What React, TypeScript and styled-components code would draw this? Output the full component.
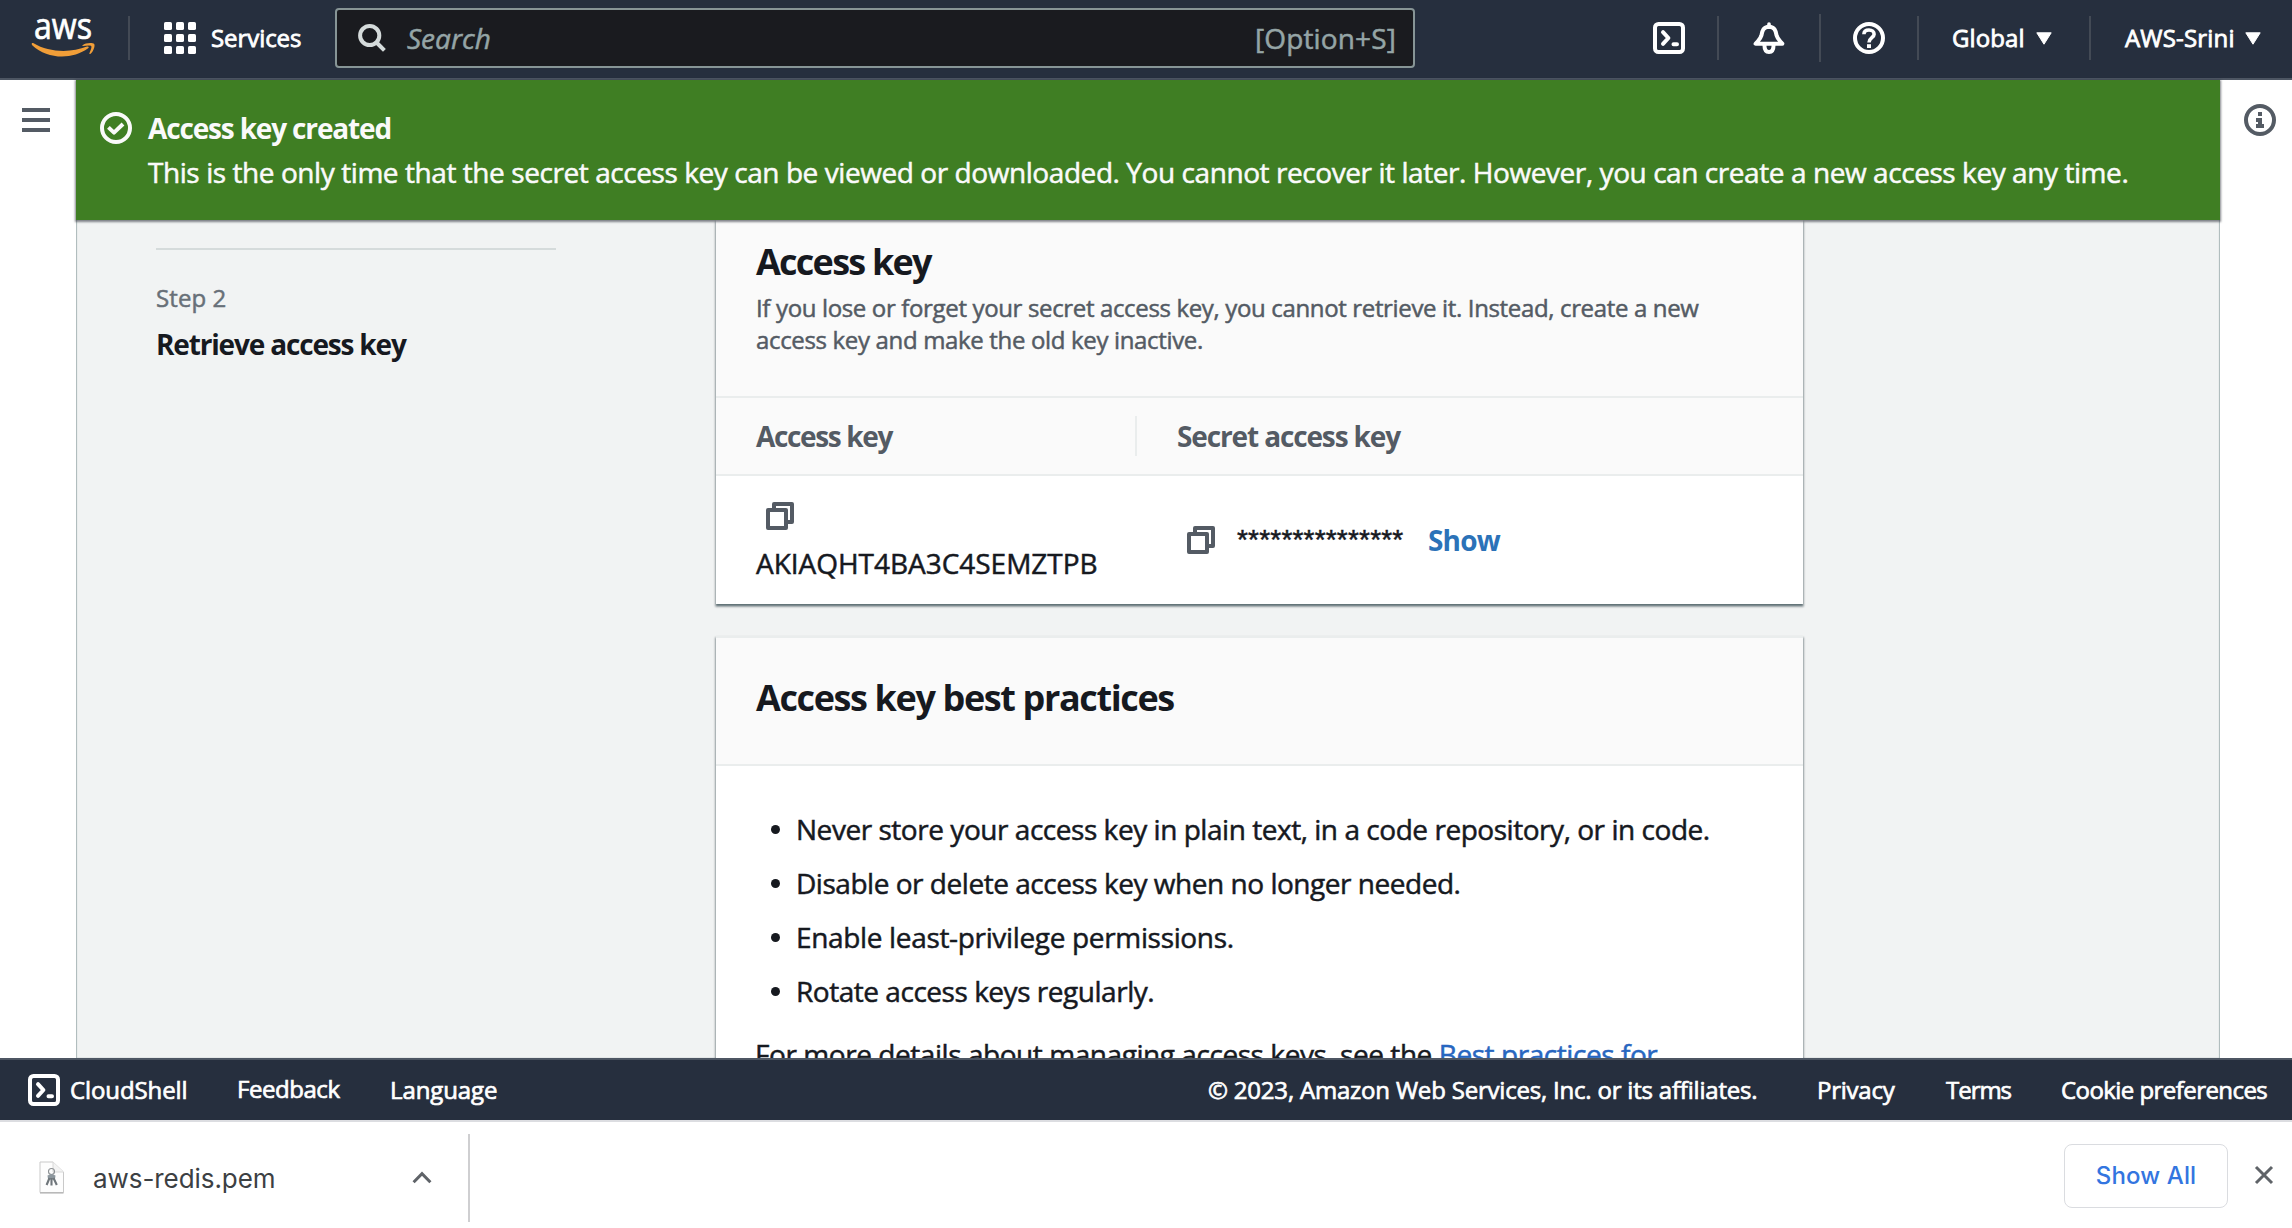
import React from "react";
import styled, { createGlobalStyle, css } from "styled-components";

const ember = `"Open Sans", "Noto Sans", "Liberation Sans", sans-serif`;
const system = `Inter, "Liberation Sans", sans-serif`;

const GlobalStyle = createGlobalStyle`
  *, *::before, *::after { box-sizing: border-box; }
  body { margin: 0; background: #fff; }
  h2, p, ul, li { margin: 0; padding: 0; font: inherit; list-style: none; }
  svg { display: block; flex: none; overflow: visible; }
`;

/* letter-spacing shared by every text part */
type Tracked = { $track?: number };
const tracking = css<Tracked>`
  letter-spacing: ${({ $track = 0 }) => $track}px;
  white-space: nowrap;
`;

/* a slightly heavier cut of the regular weight */
const sturdy = css`
  -webkit-text-stroke: 0.5px currentColor;
`;

const Page = styled.div`
  display: flex;
  flex-direction: column;
  width: 2292px;
  height: 1228px;
  overflow: hidden;
  font-family: ${ember};
  color: #16191f;
`;

/* ---------- top navigation ---------- */

const TopNav = styled.header`
  display: flex;
  align-items: center;
  height: 80px;
  flex: none;
  padding-bottom: 2px;
  background: #262f3e;
  border-bottom: 2px solid #4d5663;
  color: #fff;
`;

const Brand = styled.div`
  display: flex;
  align-items: center;
  width: 335px;
  padding-left: 31px;
`;

const NavRule = styled.span`
  width: 2px;
  height: 44px;
  margin: 0 34px 0 33px;
  background: #434a55;
`;

const NavText = styled.span<Tracked>`
  font-size: 24px;
  line-height: 32px;
  -webkit-text-stroke: 0.8px currentColor;
  ${tracking}
`;

const ServicesButton = styled.div`
  display: flex;
  align-items: center;
  gap: 15px;
`;

const SearchBox = styled.div`
  display: flex;
  align-items: center;
  width: 1080px;
  height: 60px;
  padding: 0 17px 0 21px;
  border: 2px solid #879596;
  border-radius: 4px;
  background: #1a1b1f;
  color: #95a5a6;
  font-size: 28px;
  line-height: 40px;
  ${sturdy}
`;

const SearchHint = styled.span`
  flex: 1;
  margin-left: 21px;
  font-style: italic;
`;

const Shortcut = styled.span<Tracked>`
  ${tracking}
`;

const NavCells = styled.div`
  display: grid;
  grid-template-columns: 304px 102px 98px 172px 201px;
  align-items: center;
`;

const NavCell = styled.div<{ $pad: number; $tall?: boolean }>`
  display: flex;
  align-items: center;
  height: ${({ $tall }) => ($tall ? 48 : 44)}px;
  padding-left: ${({ $pad }) => $pad}px;
  border-right: 2px solid #434a55;
  &:last-child { border-right: 0; }
`;

const CaretSvg = styled.svg<{ $gap: number }>`
  margin-left: ${({ $gap }) => $gap}px;
`;

/* ---------- middle ---------- */

const Middle = styled.div`
  display: flex;
  flex: 1;
  min-height: 0;
`;

const Rail = styled.aside<{ $w: number; $x: number; $y: number }>`
  width: ${({ $w }) => $w}px;
  flex: none;
  padding: ${({ $y, $x }) => `${$y}px 0 0 ${$x}px`};
  background: #fff;
`;

const Main = styled.main`
  display: flex;
  flex-direction: column;
  flex: 1;
  min-width: 0;
  background: #f1f3f3;
  box-shadow: inset 1px 0 1px #aab7b8, inset -1px 0 1px #aab7b8;
`;

const Flash = styled.section`
  position: relative;
  z-index: 1;
  display: flex;
  gap: 16px;
  height: 140px;
  flex: none;
  padding: 28px 24px 0;
  background: #3f7e23;
  color: #fafafa;
  box-shadow: 0 1px 2px 1px rgba(32, 36, 48, 0.55);
  svg { margin-top: 4px; }
`;

const FlashTitle = styled.p<Tracked>`
  font-size: 28px;
  font-weight: 700;
  line-height: 40px;
  ${tracking}
`;

const FlashBody = styled.p<Tracked>`
  margin-top: 4px;
  font-size: 28px;
  line-height: 40px;
  ${sturdy}
  ${tracking}
`;

const Content = styled.div`
  display: flex;
  flex: 1;
  min-height: 0;
  overflow: hidden;
`;

const Steps = styled.nav`
  width: 640px;
  flex: none;
  padding: 28px 0 0 80px;
`;

const StepRule = styled.div`
  width: 400px;
  height: 2px;
  margin-bottom: 33px;
  background: #d5dbdb;
`;

const StepLabel = styled.p<Tracked>`
  color: #687078;
  font-size: 24px;
  line-height: 30px;
  ${sturdy}
  ${tracking}
`;

const StepName = styled.p<Tracked>`
  margin-top: 11px;
  font-size: 28px;
  font-weight: 700;
  line-height: 40px;
  ${tracking}
`;

const Cards = styled.div`
  display: flex;
  flex-direction: column;
  gap: 32px;
  width: 1087px;
  flex: none;
`;

const Card = styled.section<{ $topRule?: boolean }>`
  flex: none;
  background: #fff;
  border-top: ${({ $topRule }) => ($topRule ? "2px solid #eaeded" : "0")};
  box-shadow: 0 2px 2px 0 rgba(0, 28, 36, 0.5), 0 2px 2px 1px rgba(0, 28, 36, 0.22);
`;

const CardHeader = styled.div<{ $h: number; $top: number }>`
  height: ${({ $h }) => $h}px;
  padding: ${({ $top }) => $top}px 40px 0;
  background: #fafafa;
  border-bottom: 2px solid #eaeded;
`;

const Heading = styled.h2<Tracked>`
  font-size: 36px;
  font-weight: 700;
  line-height: 44px;
  ${tracking}
`;

const Description = styled.p<Tracked>`
  color: #545b64;
  font-size: 24px;
  line-height: 32px;
  ${sturdy}
  ${tracking}
`;

const DescriptionBlock = styled.div`
  margin-top: 8px;
`;

const TableRow = styled.div<{ $head?: boolean }>`
  display: grid;
  grid-template-columns: 421px 1fr;
  align-items: center;
  height: ${({ $head }) => ($head ? 78 : 128)}px;
  background: ${({ $head }) => ($head ? "#fafafa" : "#fff")};
  border-bottom: ${({ $head }) => ($head ? "2px solid #eaeded" : "0")};
`;

const HeadCell = styled.div<Tracked>`
  padding-left: 40px;
  border-right: 2px solid #eaeded;
  color: #545b64;
  font-size: 28px;
  font-weight: 700;
  line-height: 40px;
  ${tracking}
  &:last-child { border-right: 0; }
`;

const KeyCell = styled.div`
  display: flex;
  flex-direction: column;
  align-self: start;
  gap: 13px;
  padding: 26px 0 0 40px;
  svg { margin-left: 10px; }
`;

const KeyValue = styled.span<Tracked>`
  font-size: 28px;
  line-height: 40px;
  ${sturdy}
  ${tracking}
`;

const SecretCell = styled.div`
  display: flex;
  align-items: center;
  padding-left: 50px;
`;

const Masked = styled.span<Tracked>`
  width: 191px;
  margin-left: 22px;
  font-family: "Liberation Sans", sans-serif;
  font-size: 28px;
  line-height: 40px;
  ${sturdy}
  ${tracking}
`;

const ShowLink = styled.a<Tracked>`
  color: #2b72b8;
  font-size: 28px;
  font-weight: 700;
  line-height: 40px;
  ${tracking}
`;

const Practices = styled.ul`
  padding: 36px 0 0 55px;
`;

const Practice = styled.li<Tracked>`
  display: flex;
  align-items: center;
  gap: 16px;
  font-size: 28px;
  line-height: 54px;
  ${sturdy}
  ${tracking}
  &::before {
    content: "";
    width: 9px;
    height: 9px;
    border-radius: 50%;
    background: #16191f;
  }
`;

const MoreDetails = styled.p<Tracked>`
  padding: 14px 0 0 39px;
  font-size: 28px;
  line-height: 44px;
  ${sturdy}
  ${tracking}
`;

const DocLink = styled.a`
  color: #2766c0;
`;

/* ---------- footer ---------- */

const Footer = styled.footer`
  display: grid;
  grid-template-columns: 209px 153px 818px 609px 129px 115px 1fr;
  align-items: center;
  height: 64px;
  flex: none;
  padding-left: 28px;
  background: #262f3e;
  border-top: 2px solid #4d5663;
  border-bottom: 2px solid #dcdde1;
  color: #fff;
`;

const FooterText = styled.span<Tracked & { $raised?: boolean }>`
  padding-bottom: ${({ $raised }) => ($raised ? 2 : 0)}px;
  font-size: 24px;
  line-height: 32px;
  -webkit-text-stroke: 0.7px currentColor;
  ${tracking}
`;

const ShellLink = styled.div`
  display: flex;
  align-items: center;
  gap: 10px;
`;

/* ---------- browser download shelf ---------- */

const Shelf = styled.div`
  display: flex;
  align-items: center;
  height: 106px;
  flex: none;
  padding-right: 19px;
  background: #fff;
  font-family: ${system};
`;

const Download = styled.div`
  display: flex;
  align-items: center;
  width: 470px;
  height: 88px;
  margin-top: 6px;
  padding: 0 36px 2px 39px;
  border-right: 2px solid #cfcfd1;
`;

const FileName = styled.span<Tracked>`
  flex: 1;
  margin: 3px 0 0 28px;
  color: #3c4043;
  font-size: 26px;
  line-height: 32px;
  ${tracking}
`;

const ShowAll = styled.button<Tracked>`
  width: 164px;
  height: 64px;
  margin: 2px 27px 0 auto;
  padding: 0 0 1px;
  border: 1px solid #dadce0;
  border-radius: 8px;
  background: #fff;
  color: #3375e0;
  font-family: inherit;
  font-size: 24px;
  font-weight: 500;
  ${tracking}
`;

/* ---------- drawings ---------- */

const AwsLogo = () => (
  <svg width="64" height="38" viewBox="0 0 64 38">
    <text x="3" y="19.6" fontFamily='"Open Sans", sans-serif' fontSize="36" fill="#fff" stroke="#fff" strokeWidth="0.7" textLength="58" lengthAdjust="spacingAndGlyphs">
      aws
    </text>
    <path fill="#f19e38" d="M.7 25.2C.5 24.2 1.6 23.7 2.6 24.3C18 33.6 40 34 56 27.6C57.6 27 58.4 28.4 57.1 29.3C41 41 16.5 40.4 1.2 26.2Z" />
    <path fill="#f19e38" d="M51.4 26.4C54.4 23.6 61.6 23.4 63.2 24.9C64.3 26.6 62.6 32.2 59.6 34.7C58.7 35.3 58.1 34.9 58.5 34C59.6 31.4 61 28 60.2 27C59.2 26 55.6 26.4 52 26.9C51.2 27 51 26.8 51.4 26.4Z" />
  </svg>
);

const Caret = ({ gap }: { gap: number }) => (
  <CaretSvg $gap={gap} width="16" height="13" viewBox="0 0 16 13">
    <path fill="#fff" stroke="#fff" strokeLinejoin="round" d="M.8.8H15.2L8 12.2Z" />
  </CaretSvg>
);

const GridIcon = () => (
  <svg width="32" height="32" viewBox="0 0 32 32" fill="#fff">
    {[0, 12, 24].map((y) => [0, 12, 24].map((x) => <rect key={`${x}-${y}`} x={x} y={y} width="8" height="8" rx="1.6" />))}
  </svg>
);

const SearchIcon = () => (
  <svg width="28" height="28" viewBox="0 0 28 28" fill="none" stroke="#d5dbdb" strokeWidth="4">
    <circle cx="11.7" cy="11.5" r="9.6" />
    <path d="M18.5 18.5L26.4 26.4" />
  </svg>
);

const ShellIcon = () => (
  <svg width="32" height="32" viewBox="0 0 32 32" fill="none" stroke="#fff" strokeWidth="4" strokeLinecap="round" strokeLinejoin="round">
    <rect x="2" y="2" width="28" height="28" rx="3.5" />
    <path d="M10 10.2L15.4 16L10 21.8M20.5 22.2H24" />
  </svg>
);

const BellIcon = () => (
  <svg width="32" height="32" viewBox="0 0 32 32" fill="none" stroke="#fff" strokeWidth="4" strokeLinejoin="round">
    <path d="M16 2V5" strokeWidth="3.6" strokeLinecap="round" />
    <path d="M2.6 21.8H29.4C27.2 19 24.6 17.4 23.6 13.6C22.8 10 22.4 5 16 4.8C9.6 5 9.2 10 8.4 13.6C7.4 17.4 4.8 19 2.6 21.8Z" />
    <path d="M11.4 22.5C11.4 27.6 13 30 16 30C19 30 20.6 27.6 20.6 22.5" />
  </svg>
);

const HelpIcon = () => (
  <svg width="32" height="32" viewBox="0 0 32 32" fill="none" stroke="#fff" strokeWidth="4">
    <circle cx="16" cy="16" r="14" />
    <path d="M10.9 12.2C11 9.4 13 8 16 8C19 8 21.1 9.6 21.1 12.2C21.1 15.6 16 15.8 16 20.4" strokeWidth="3.6" />
    <path d="M16 22.2V26" />
  </svg>
);

const InfoIcon = () => (
  <svg width="32" height="32" viewBox="0 0 32 32">
    <circle cx="16" cy="16" r="14" fill="none" stroke="#545b64" strokeWidth="4" />
    <path fill="#545b64" d="M14 8H18V12H14ZM12 14H18V20H20V24H12V20H14V18H12Z" />
  </svg>
);

const SuccessIcon = () => (
  <svg width="32" height="32" viewBox="0 0 32 32" fill="none" stroke="#fafafa" strokeWidth="4">
    <circle cx="16" cy="16" r="14" />
    <path d="M8.4 15.4L14 20.6L23 12" strokeLinejoin="round" />
  </svg>
);

const MenuIcon = () => (
  <svg width="28" height="24" viewBox="0 0 28 24" stroke="#545b64" strokeWidth="4">
    <path d="M0 2H28M0 12H28M0 22H28" />
  </svg>
);

const CopyIcon = () => (
  <svg width="28" height="28" viewBox="0 0 28 28" fill="none" stroke="#545b64" strokeWidth="4" strokeLinejoin="round">
    <path d="M8 7V2H26V20H21" />
    <rect x="2" y="8" width="18" height="18" />
  </svg>
);

const KeyFileIcon = () => (
  <svg width="26" height="33" viewBox="0 0 26 33" fill="none">
    <path d="M1 1H14L24.5 11V31.5H1Z" fill="#fdfdfd" stroke="#c9c9c9" strokeWidth="1" />
    <path d="M14 1V11H24.5" fill="#f3f3f3" stroke="#d8d8d8" strokeWidth="1" />
    <path d="M1 32H24.5" stroke="#a9a9a9" />
    <circle cx="12.5" cy="10.5" r="3" stroke="#8b8f92" strokeWidth="1.1" />
    <path d="M8.5 14.5L12.5 13L16.5 14.5L16 18L12.5 19L9 18Z" fill="#8d979e" />
    <path d="M10.5 17L7.6 24M12.5 17V24.6M14.5 17L17.8 24" stroke="#6f767b" strokeWidth="2.1" />
  </svg>
);

const ChevronUp = () => (
  <svg width="20" height="13" viewBox="0 0 20 13" fill="none" stroke="#5f6368" strokeWidth="3">
    <path d="M1.6 11.2L10 2.6L18.4 11.2" />
  </svg>
);

const CloseIcon = () => (
  <svg width="18" height="18" viewBox="0 0 18 18" stroke="#5f6368" strokeWidth="3">
    <path d="M1 1L17 17M17 1L1 17" />
  </svg>
);

const practices = [
  { text: "Never store your access key in plain text, in a code repository, or in code.", track: -0.46 },
  { text: "Disable or delete access key when no longer needed.", track: -0.47 },
  { text: "Enable least-privilege permissions.", track: -0.34 },
  { text: "Rotate access keys regularly.", track: -0.47 },
];

export default function App() {
  return (
    <Page>
      <GlobalStyle />
      <TopNav>
        <Brand>
          <AwsLogo />
          <NavRule />
          <ServicesButton>
            <GridIcon />
            <NavText $track={-0.07}>Services</NavText>
          </ServicesButton>
        </Brand>
        <SearchBox>
          <SearchIcon />
          <SearchHint>Search</SearchHint>
          <Shortcut $track={0.13}>[Option+S]</Shortcut>
        </SearchBox>
        <NavCells>
          <NavCell $pad={238}><ShellIcon /></NavCell>
          <NavCell $pad={34} $tall><BellIcon /></NavCell>
          <NavCell $pad={32}><HelpIcon /></NavCell>
          <NavCell $pad={33}>
            <NavText $track={0.09}>Global</NavText>
            <Caret gap={11} />
          </NavCell>
          <NavCell $pad={34}>
            <NavText $track={0.19}>AWS-Srini</NavText>
            <Caret gap={10} />
          </NavCell>
        </NavCells>
      </TopNav>

      <Middle>
        <Rail $w={76} $x={22} $y={28}><MenuIcon /></Rail>
        <Main>
          <Flash>
            <SuccessIcon />
            <div>
              <FlashTitle $track={-1.16}>Access key created</FlashTitle>
              <FlashBody $track={-0.43}>
                This is the only time that the secret access key can be viewed or downloaded. You cannot recover it later. However, you can create a new access key any time.
              </FlashBody>
            </div>
          </Flash>
          <Content>
            <Steps>
              <StepRule />
              <StepLabel $track={0.1}>Step 2</StepLabel>
              <StepName $track={-1.17}>Retrieve access key</StepName>
            </Steps>
            <Cards>
              <Card>
                <CardHeader $h={178} $top={20}>
                  <Heading $track={-1.75}>Access key</Heading>
                  <DescriptionBlock>
                    <Description $track={-0.35}>
                      If you lose or forget your secret access key, you cannot retrieve it. Instead, create a new
                    </Description>
                    <Description $track={-0.34}>access key and make the old key inactive.</Description>
                  </DescriptionBlock>
                </CardHeader>
                <TableRow $head>
                  <HeadCell $track={-1.35}>Access key</HeadCell>
                  <HeadCell $track={-1.13}>Secret access key</HeadCell>
                </TableRow>
                <TableRow>
                  <KeyCell>
                    <CopyIcon />
                    <KeyValue $track={-0.03}>AKIAQHT4BA3C4SEMZTPB</KeyValue>
                  </KeyCell>
                  <SecretCell>
                    <CopyIcon />
                    <Masked $track={0.2}>***************</Masked>
                    <ShowLink $track={-0.82}>Show</ShowLink>
                  </SecretCell>
                </TableRow>
              </Card>
              <Card $topRule>
                <CardHeader $h={128} $top={38}>
                  <Heading $track={-1.38}>Access key best practices</Heading>
                </CardHeader>
                <Practices>
                  {practices.map(({ text, track }) => (
                    <Practice key={text} $track={track}>{text}</Practice>
                  ))}
                </Practices>
                <MoreDetails $track={-0.44}>
                  For more details about managing access keys, see the <DocLink>Best practices for</DocLink>
                </MoreDetails>
              </Card>
            </Cards>
          </Content>
        </Main>
        <Rail $w={72} $x={24} $y={24}><InfoIcon /></Rail>
      </Middle>

      <Footer>
        <ShellLink>
          <ShellIcon />
          <FooterText $track={-0.1}>CloudShell</FooterText>
        </ShellLink>
        <FooterText $track={-0.45} $raised>Feedback</FooterText>
        <FooterText $track={-0.1}>Language</FooterText>
        <FooterText $track={-0.2}>© 2023, Amazon Web Services, Inc. or its affiliates.</FooterText>
        <FooterText $track={-0.25}>Privacy</FooterText>
        <FooterText $track={-1.03}>Terms</FooterText>
        <FooterText $track={-0.56}>Cookie preferences</FooterText>
      </Footer>

      <Shelf>
        <Download>
          <KeyFileIcon />
          <FileName $track={-0.07}>aws-redis.pem</FileName>
          <ChevronUp />
        </Download>
        <ShowAll $track={0.13}>Show All</ShowAll>
        <CloseIcon />
      </Shelf>
    </Page>
  );
}
